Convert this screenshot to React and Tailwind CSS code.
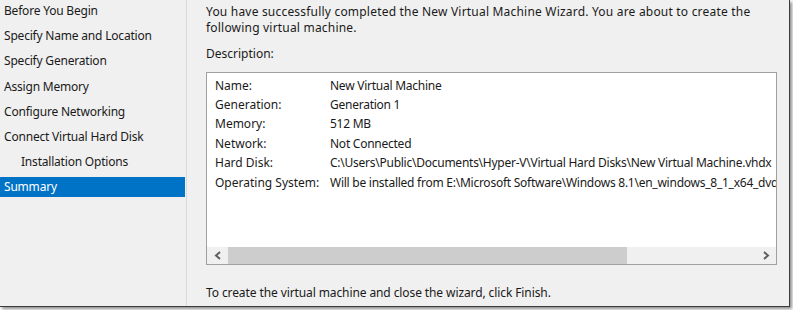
const steps = [
  { label: "Before You Begin" },
  { label: "Specify Name and Location" },
  { label: "Specify Generation" },
  { label: "Assign Memory" },
  { label: "Configure Networking" },
  { label: "Connect Virtual Hard Disk" },
  { label: "Installation Options", indent: true },
  { label: "Summary", active: true },
];

const rows = [
  ["Name:", "New Virtual Machine"],
  ["Generation:", "Generation 1"],
  ["Memory:", "512 MB"],
  ["Network:", "Not Connected"],
  ["Hard Disk:", "C:\\Users\\Public\\Documents\\Hyper-V\\Virtual Hard Disks\\New Virtual Machine.vhdx"],
  ["Operating System:", "Will be installed from E:\\Microsoft Software\\Windows 8.1\\en_windows_8_1_x64_dvd_2707217.iso"],
];

function Chevron({ dir }) {
  return (
    <svg width="8" height="9" viewBox="0 0 8 9">
      <path
        d={dir === "left" ? "M6 1 L2 4.5 L6 8" : "M2 1 L6 4.5 L2 8"}
        fill="none"
        stroke="#606060"
        strokeWidth="2"
      />
    </svg>
  );
}

export default function App() {
  return (
    <div className="w-[793px] h-[310px] bg-white overflow-hidden font-['Noto_Sans',sans-serif] text-[12px] text-[#1a1a1a]">
      <div className="flex w-[790px] h-[307px] bg-[#f0f0f0] border-r border-b border-[#3c3c3c] shadow-[2px_2px_3px_rgba(0,0,0,0.45)]">
        {/* wizard steps */}
        <div className="w-[187px] shrink-0 border-r border-[#d9d9d9] pt-[1px] flex flex-col gap-[5.2px] tracking-[-0.2px]">
          {steps.map((s) => (
            <div
              key={s.label}
              className={
                "h-5 w-[185px] flex items-center leading-none whitespace-nowrap " +
                (s.indent ? "pl-[21px] " : "pl-[4px] ") +
                (s.active ? "bg-[#0173c7] text-white" : "")
              }
            >
              {s.label}
            </div>
          ))}
        </div>

        {/* summary page */}
        <div className="flex-1 pl-[19px] pt-[4px]">
          <p className="leading-[16px] whitespace-nowrap tracking-[0.2px]">
            You have successfully completed the New Virtual Machine Wizard. You are about to create the
            <br />
            following virtual machine.
          </p>
          <p className="mt-[10px] leading-[16px]">Description:</p>

          <div className="mt-[10px] w-[571px] h-[193px] border border-[#a0a0a0] bg-white flex flex-col">
            <div className="flex-1 pt-[3px] pl-[8px] overflow-hidden">
              {rows.map(([k, v]) => (
                <div key={k} className="flex h-[19.4px] items-center whitespace-nowrap">
                  <span className="w-[115px] shrink-0">{k}</span>
                  <span className="tracking-[-0.25px]">{v}</span>
                </div>
              ))}
            </div>
            <div className="h-[17px] flex bg-[#f0f0f0]">
              <div className="w-[21px] flex items-center justify-center">
                <Chevron dir="left" />
              </div>
              <div className="w-[399px] bg-[#cdcdcd]" />
              <div className="flex-1" />
              <div className="w-[21px] flex items-center justify-center">
                <Chevron dir="right" />
              </div>
            </div>
          </div>

          <p className="mt-[20px] leading-[16px] tracking-[-0.1px]">
            To create the virtual machine and close the wizard, click Finish.
          </p>
        </div>
      </div>
    </div>
  );
}
